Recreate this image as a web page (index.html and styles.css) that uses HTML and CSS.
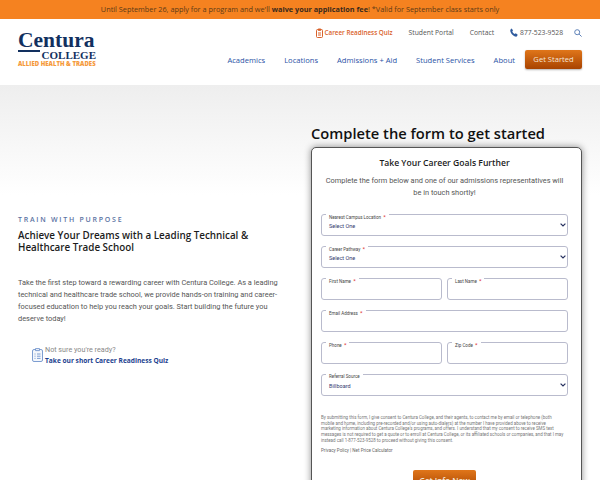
FILE: index.html
```html
<!DOCTYPE html>
<html lang="en">
<head>
    <meta charset="UTF-8">
    <meta name="viewport" content="width=device-width, initial-scale=1.0">
    <title>Centura College</title>
    <link rel="stylesheet" href="styles.css">
</head>
<body>
    <div class="promo">Until September 26, apply for a program and we'll <b>waive your application fee</b>! *Valid for September class starts only</div>

    <div class="header">
        <div class="logo">
            <div class="logo-name">Centura</div>
            <div class="logo-row"><span class="logo-line"></span><span class="logo-college">COLLEGE</span></div>
            <div class="logo-tag">ALLIED HEALTH &amp; TRADES</div>
        </div>
        <div class="header-right">
            <div class="topnav">
                <a class="quiz-link" href="#">
                    <svg width="7" height="10" viewBox="0 0 7 10" fill="none" stroke="#d9622b" stroke-width="1"><rect x="0.5" y="1.5" width="6" height="8" rx="1"/><path d="M2.2 1h2.6v1.4H2.2zM2 5h3M2 7h3"/></svg>
                    Career Readiness Quiz
                </a>
                <a href="#">Student Portal</a>
                <a href="#">Contact</a>
                <a class="phone" href="#">
                    <svg width="8" height="9" viewBox="0 0 8 9"><path d="M1.6 0.4 3 2.3 2.3 3.4C2.7 4.6 3.5 5.4 4.7 6L5.8 5.3 7.7 6.8 7 8.2C6.6 8.8 5.6 8.8 4.4 8.2 2.4 7.2 1 5.6 0.4 3.6 0 2.4 0.4 1 1.6 0.4Z" fill="#2f5b9e"/></svg>
                    877-523-9528
                </a>
                <svg class="search" width="8" height="8" viewBox="0 0 8 8" fill="none" stroke="#5f82b8" stroke-width="1"><circle cx="3.2" cy="3.2" r="2.5"/><path d="M5.1 5.1 7.6 7.6"/></svg>
            </div>
            <div class="mainnav">
                <a href="#">Academics</a>
                <a href="#">Locations</a>
                <a href="#">Admissions + Aid</a>
                <a href="#">Student Services</a>
                <a href="#">About</a>
                <a class="start-btn" href="#">Get Started</a>
            </div>
        </div>
    </div>

    <div class="hero">
        <div class="intro">
            <div class="eyebrow">TRAIN WITH PURPOSE</div>
            <h2>Achieve Your Dreams with a Leading Technical &amp; Healthcare Trade School</h2>
            <p class="lead">Take the first step toward a rewarding career with Centura College. As a leading technical and healthcare trade school, we provide hands-on training and career-focused education to help you reach your goals. Start building the future you deserve today!</p>
            <div class="quiz-box">
                <svg width="11" height="14" viewBox="0 0 11 14" fill="#f4f7fc" stroke="#6f93cc" stroke-width="0.9"><rect x="0.5" y="1.5" width="10" height="12" rx="1.5"/><path d="M3.5 0.6h4v2h-4z"/><path d="M2.5 6h1M5 6h3.5M2.5 8.2h1M5 8.2h3.5M2.5 10.4h1M5 10.4h3.5" fill="none"/></svg>
                <div>
                    <div class="quiz-q">Not sure you're ready?</div>
                    <a class="quiz-a" href="#">Take our short Career Readiness Quiz</a>
                </div>
            </div>
        </div>

        <div class="form-col">
            <h1>Complete the form to get started</h1>
            <div class="form-card">
                <h3>Take Your Career Goals Further</h3>
                <p class="form-desc">Complete the form below and one of our admissions representatives will be in touch shortly!</p>

                <div class="fields">
                    <div class="field">
                        <label>Nearest Campus Location <i>*</i></label>
                        <div class="value">Select One</div>
                        <svg class="chev" width="6" height="4" viewBox="0 0 6 4" fill="none" stroke="#26305f" stroke-width="1.2"><path d="M0.6 0.6 3 3 5.4 0.6"/></svg>
                    </div>
                    <div class="field">
                        <label>Career Pathway <i>*</i></label>
                        <div class="value">Select One</div>
                        <svg class="chev" width="6" height="4" viewBox="0 0 6 4" fill="none" stroke="#26305f" stroke-width="1.2"><path d="M0.6 0.6 3 3 5.4 0.6"/></svg>
                    </div>
                    <div class="field-row">
                        <div class="field"><label>First Name <i>*</i></label></div>
                        <div class="field"><label>Last Name <i>*</i></label></div>
                    </div>
                    <div class="field"><label>Email Address <i>*</i></label></div>
                    <div class="field-row">
                        <div class="field"><label>Phone <i>*</i></label></div>
                        <div class="field"><label>Zip Code <i>*</i></label></div>
                    </div>
                    <div class="field">
                        <label>Referral Source</label>
                        <div class="value">Billboard</div>
                        <svg class="chev" width="6" height="4" viewBox="0 0 6 4" fill="none" stroke="#26305f" stroke-width="1.2"><path d="M0.6 0.6 3 3 5.4 0.6"/></svg>
                    </div>
                </div>

                <p class="legal">By submitting this form, I give consent to Centura College, and their agents, to contact me by email or telephone (both mobile and home, including pre-recorded and/or using auto-dialers) at the number I have provided above to receive marketing information about Centura College's programs, and offers. I understand that my consent to receive SMS text messages is not required to get a quote or to enroll at Centura College, or its affiliated schools or companies, and that I may instead call 1-877-523-9528 to proceed without giving this consent.</p>
                <p class="legal-links">Privacy Policy | Net Price Calculator</p>
                <div class="submit-wrap"><button class="submit">Get Info Now</button></div>
            </div>
        </div>
    </div>
</body>
</html>
```

FILE: styles.css
```css
* {
    box-sizing: border-box;
}
html, body {
    height: 480px;
    overflow: hidden;
}
body {
    margin: 0;
    font-family: 'Roboto', sans-serif;
    color: #333;
    background-color: #fff;
}
a {
    text-decoration: none;
    color: inherit;
}
.promo {
    height: 19px;
    background-color: #f58220;
    color: #5b3a17;
    font-family: 'Open Sans', sans-serif;
    font-size: 7.3px;
    line-height: 19px;
    text-align: center;
}
.promo b {
    color: #3a2a1c;
}
.header {
    height: 66px;
    display: flex;
    justify-content: space-between;
    padding: 12px 18px 0 18px;
    background-color: #fff;
}
.logo {
    width: 78px;
    color: #12305f;
}
.logo-name {
    font-family: 'Liberation Serif', serif;
    font-weight: bold;
    font-size: 21.5px;
    line-height: 18px;
}
.logo-row {
    display: flex;
    gap: 2px;
    height: 11px;
    margin-top: 1px;
}
.logo-line {
    flex: 1;
    height: 2px;
    background-color: #12305f;
}
.logo-college {
    font-family: 'Liberation Serif', serif;
    font-weight: bold;
    font-size: 11px;
    line-height: 10px;
}
.logo-tag {
    font-family: 'Open Sans', sans-serif;
    font-weight: 800;
    font-size: 6px;
    line-height: 6px;
    white-space: nowrap;
    color: #f59a3c;
}
.header-right {
    display: flex;
    flex-direction: column;
    align-items: flex-end;
}
.topnav {
    display: flex;
    align-items: center;
    gap: 16px;
    height: 9px;
    margin-top: -3px;
    font-family: 'Open Sans', sans-serif;
    font-weight: 500;
    font-size: 6.75px;
    color: #555;
}
.quiz-link {
    display: flex;
    align-items: center;
    gap: 1.5px;
    font-size: 6.3px;
    color: #d9622b;
    font-weight: 600;
}
.phone {
    display: flex;
    align-items: center;
    gap: 2px;
}
.search {
    margin-left: -5px;
}
.mainnav {
    display: flex;
    align-items: center;
    gap: 19px;
    margin-top: 13px;
    font-family: 'Open Sans', sans-serif;
    font-size: 7.6px;
    color: #2a52a5;
}
.start-btn {
    width: 57px;
    height: 19px;
    line-height: 19px;
    text-align: center;
    margin-left: -9px;
    border-radius: 2px;
    background: linear-gradient(#e0761a, #a84300);
    color: #f5e6d8;
    box-shadow: 0 1px 2px rgba(0,0,0,0.3);
}
.hero {
    display: flex;
    height: 395px;
    padding: 0 18px;
    background: linear-gradient(#eeeeee, #ffffff 110px);
}
.intro {
    width: 293px;
    padding-top: 130px;
}
.eyebrow {
    font-family: 'Open Sans', sans-serif;
    font-weight: 600;
    font-size: 7px;
    line-height: 9px;
    letter-spacing: 1.75px;
    color: #5c73a3;
}
h2 {
    margin: 5px 0 0 0;
    width: 250px;
    font-family: 'Open Sans', sans-serif;
    font-weight: 600;
    font-size: 9.85px;
    line-height: 12.3px;
    color: #1c1c1c;
}
.lead {
    margin: 23px 0 0 0;
    width: 262px;
    font-size: 7.4px;
    line-height: 12px;
    color: #555;
}
.quiz-box {
    display: flex;
    align-items: center;
    gap: 2px;
    margin: 19px 0 0 14px;
}
.quiz-q {
    font-size: 7.2px;
    line-height: 11px;
    color: #888;
}
.quiz-a {
    display: block;
    font-family: 'Open Sans', sans-serif;
    font-weight: 700;
    font-size: 6.6px;
    line-height: 11px;
    color: #1c3f8f;
}
.form-col {
    width: 271px;
}
h1 {
    margin: 39px 0 0 0;
    height: 23px;
    font-family: 'Open Sans', sans-serif;
    font-weight: 600;
    font-size: 14.7px;
    line-height: 19px;
    white-space: nowrap;
    color: #111;
}
.form-card {
    height: 360px;
    padding: 10px 13px 0 9px;
    background-color: #fff;
    border: 1px solid #555;
    border-radius: 5px;
    box-shadow: 0 0 7px rgba(0,0,0,0.45);
}
h3 {
    margin: 0;
    text-align: center;
    font-family: 'Open Sans', sans-serif;
    font-weight: 600;
    font-size: 8.6px;
    line-height: 11px;
    color: #1c1c1c;
}
.form-desc {
    margin: 6px 0 0 0;
    text-align: center;
    font-size: 7.4px;
    line-height: 12px;
    color: #555;
}
.fields {
    display: flex;
    flex-direction: column;
    gap: 10px;
    margin-top: 15px;
}
.field-row {
    display: flex;
    gap: 5px;
}
.field-row .field {
    flex: 1;
}
.field {
    position: relative;
    height: 22px;
    border: 1px solid #b9bbcd;
    border-radius: 3px;
    background-color: #fff;
}
.field label {
    position: absolute;
    left: 4px;
    top: -1px;
    padding: 0 3px;
    background-color: #fff;
    font-size: 4.5px;
    line-height: 6px;
    white-space: nowrap;
    color: #444;
}
.field label i {
    font-style: normal;
    font-size: 6px;
    margin-left: 1px;
    color: #d33;
}
.value {
    padding: 7px 0 0 7px;
    font-size: 5.5px;
    line-height: 8px;
    color: #333a70;
}
.chev {
    position: absolute;
    right: 1px;
    top: 8px;
}
.legal {
    margin: 19px 0 0 0;
    padding-right: 4px;
    font-size: 4.45px;
    line-height: 5.7px;
    color: #777;
}
.legal-links {
    margin: 4px 0 0 0;
    font-size: 4.55px;
    line-height: 6px;
    color: #666;
}
.submit-wrap {
    margin-top: 15px;
    text-align: center;
}
.submit {
    width: 63px;
    height: 20px;
    border: none;
    border-radius: 2px;
    background: linear-gradient(#e0761a, #a84300);
    color: #f5e6d8;
    font-family: 'Open Sans', sans-serif;
    font-weight: 600;
    font-size: 8px;
}
```
